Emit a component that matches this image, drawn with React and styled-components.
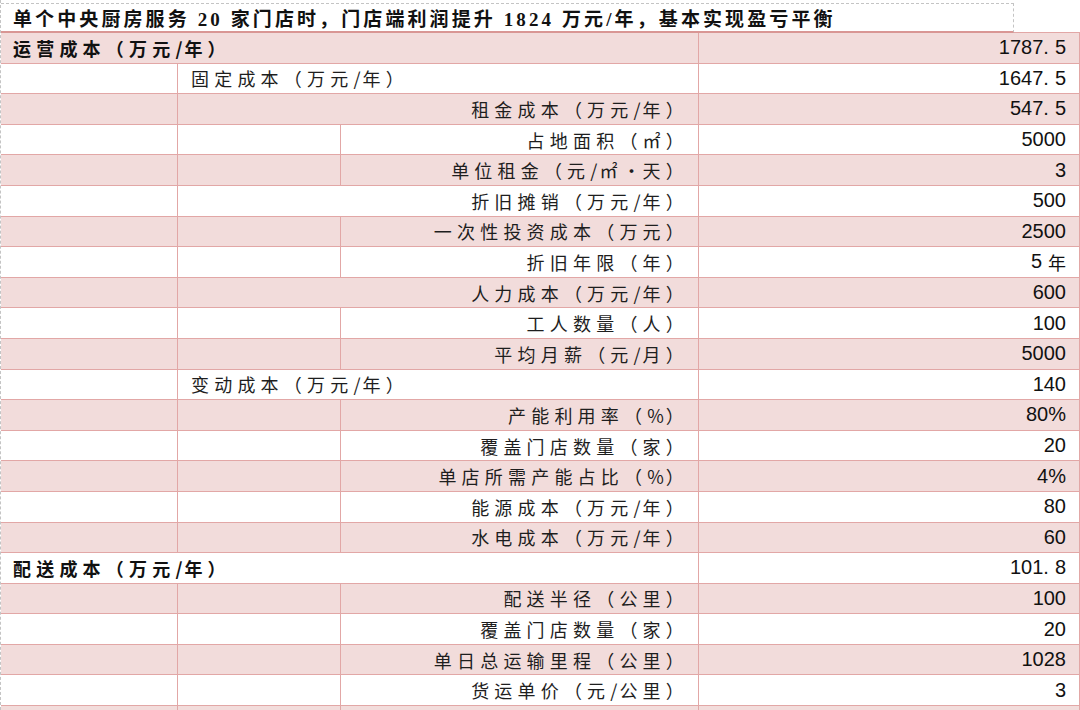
import React from 'react';
import styled, { createGlobalStyle, css } from 'styled-components';

const GlobalStyle = createGlobalStyle`
  html, body {
    margin: 0;
    padding: 0;
    background: #ffffff;
  }
  body {
    width: 1080px;
    height: 710px;
    overflow: hidden;
  }
`;

const LINE = '#e2a7a6';
const PINK = '#f2dcdb';

const Page = styled.div`
  width: 1079px;
  height: 710px;
  border-left: 1px dashed #c4c4c4;
  overflow: hidden;
`;

const TitleBar = styled.div`
  display: flex;
  padding-top: 3px;
`;

const TitleBox = styled.div`
  width: 1013px;
  height: 30px;
  box-sizing: border-box;
  border-top: 1px dashed #c4c4c4;
  border-right: 1px dashed #c4c4c4;
  border-bottom: 2px solid #d99694;
  display: flex;
  align-items: center;
  padding-left: 12px;
  font-family: "Liberation Serif", "Noto Sans CJK SC", serif;
  font-weight: 700;
  font-size: 19px;
  letter-spacing: 3.1px;
  color: #111;
  white-space: nowrap;
`;

const TitleFill = styled.div`
  flex: 1;
  border-bottom: 1px solid ${LINE};
`;

const Table = styled.div`
  display: flex;
  flex-direction: column;
`;

const Row = styled.div`
  display: grid;
  grid-template-columns: 177px 163px 358px 1fr;
  height: 30.6px;
  flex-shrink: 0;
  box-sizing: border-box;
  border-bottom: 1px solid ${LINE};
  background: ${p => (p.$shaded ? PINK : '#ffffff')};
`;

const Cell = styled.div`
  grid-column: ${p => p.$span || 'auto'};
  border-right: 1px solid ${LINE};
  display: flex;
  align-items: center;
  min-width: 0;
  box-sizing: border-box;
`;

const Label = styled(Cell)`
  font-family: "Noto Sans CJK SC", sans-serif;
  font-size: 18px;
  letter-spacing: 5.2px;
  color: #1e1e1e;
  white-space: nowrap;
  ${p => p.$bold && css`
    font-weight: 700;
    color: #111;
  `}
  ${p => p.$align === 'right'
    ? css`justify-content: flex-end; padding-right: 9px;`
    : css`justify-content: flex-start; padding-left: ${p.$indent}px;`}
`;

const Value = styled(Cell)`
  justify-content: flex-end;
  padding-right: 13px;
  font-family: "Liberation Sans", "Noto Sans CJK SC", sans-serif;
  font-size: 20px;
  color: #111;
  white-space: nowrap;
`;

const Dot = styled.span`
  margin-right: 6px;
`;

const Unit = styled.span`
  margin-left: 6px;
  font-family: "Noto Sans CJK SC", sans-serif;
  font-size: 18px;
`;

const Narrow = styled.span`
  letter-spacing: 2px;
`;

const rows = [
  { level: 0, label: '运营成本（万元/年）', value: '1787.5' },
  { level: 1, label: '固定成本（万元/年）', value: '1647.5' },
  { level: 2, label: '租金成本（万元/年）', value: '547.5' },
  { level: 3, label: '占地面积（㎡）', value: '5000' },
  { level: 3, label: '单位租金（元/㎡•天）', value: '3' },
  { level: 2, label: '折旧摊销（万元/年）', value: '500' },
  { level: 3, label: '一次性投资成本（万元）', value: '2500' },
  { level: 3, label: '折旧年限（年）', value: '5', unit: '年' },
  { level: 2, label: '人力成本（万元/年）', value: '600' },
  { level: 3, label: '工人数量（人）', value: '100' },
  { level: 3, label: '平均月薪（元/月）', value: '5000' },
  { level: 1, label: '变动成本（万元/年）', value: '140' },
  { level: 3, label: '产能利用率（%）', value: '80%' },
  { level: 3, label: '覆盖门店数量（家）', value: '20' },
  { level: 3, label: '单店所需产能占比（%）', value: '4%' },
  { level: 3, label: '能源成本（万元/年）', value: '80' },
  { level: 3, label: '水电成本（万元/年）', value: '60' },
  { level: 0, label: '配送成本（万元/年）', value: '101.8' },
  { level: 3, label: '配送半径（公里）', value: '100' },
  { level: 3, label: '覆盖门店数量（家）', value: '20' },
  { level: 3, label: '单日总运输里程（公里）', value: '1028' },
  { level: 3, label: '货运单价（元/公里）', value: '3' },
  { level: 3, label: '', value: '' },
];

// tighten the half-width symbols so the labels keep the reference widths
const renderLabel = (text) =>
  text.split(/([%/•])/).map((part, i) =>
    /^[%/•]$/.test(part) ? <Narrow key={i}>{part}</Narrow> : part
  );

const Number = ({ value, unit }) => {
  if (value.includes('.')) {
    const [a, b] = value.split('.');
    return <>{a}<Dot>.</Dot>{b}</>;
  }
  return <>{value}{unit && <Unit>{unit}</Unit>}</>;
};

const TableRow = ({ row, shaded }) => {
  const { level } = row;
  const label = renderLabel(row.label);
  let cells;
  if (level === 0) {
    cells = <Label $span="1 / 4" $bold $indent={12}>{label}</Label>;
  } else if (level === 1) {
    cells = <>
      <Cell />
      <Label $span="2 / 4" $indent={13}>{label}</Label>
    </>;
  } else if (level === 2) {
    cells = <>
      <Cell />
      <Label $span="2 / 4" $align="right">{label}</Label>
    </>;
  } else {
    cells = <>
      <Cell />
      <Cell />
      <Label $align="right">{label}</Label>
    </>;
  }
  return (
    <Row $shaded={shaded}>
      {cells}
      <Value><Number value={row.value} unit={row.unit} /></Value>
    </Row>
  );
};

export default function App() {
  return (
    <Page>
      <GlobalStyle />
      <TitleBar>
        <TitleBox>单个中央厨房服务 20 家门店时，门店端利润提升 1824 万元/年，基本实现盈亏平衡</TitleBox>
        <TitleFill />
      </TitleBar>
      <Table>
        {rows.map((row, i) => (
          <TableRow key={i} row={row} shaded={i % 2 === 0} />
        ))}
      </Table>
    </Page>
  );
}
